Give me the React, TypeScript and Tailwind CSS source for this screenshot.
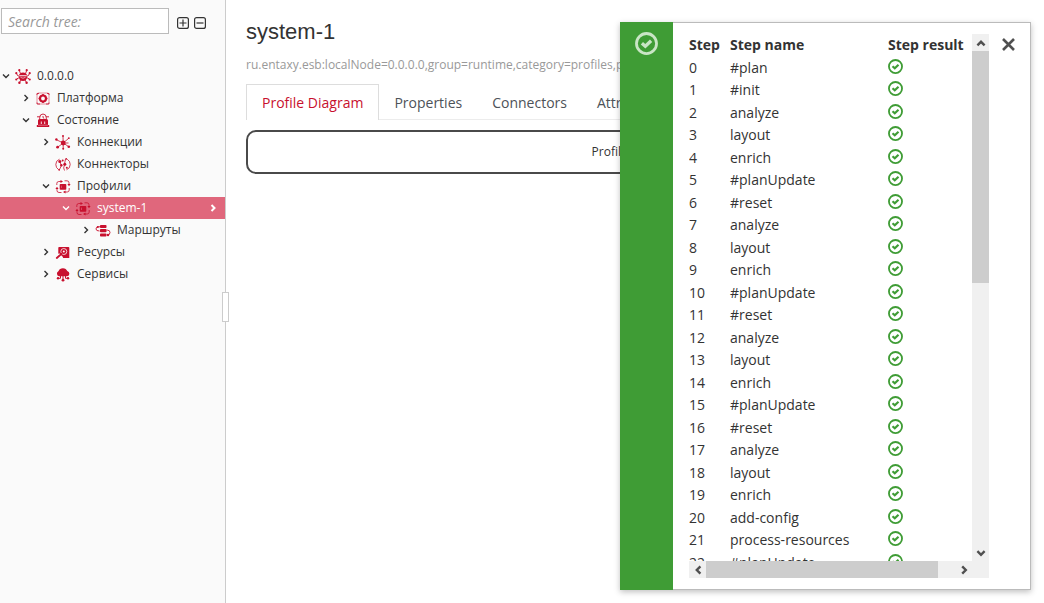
import React from 'react';

type IconName = 'node' | 'platform' | 'state' | 'connections' | 'connectors' | 'profile' | 'routes' | 'resources' | 'services';

interface TreeItem {
  label: string;
  level: number;
  icon: IconName;
  open?: boolean;
  leaf?: boolean;
  selected?: boolean;
}

const TREE: TreeItem[] = [
  { label: '0.0.0.0', level: 0, icon: 'node', open: true },
  { label: 'Платформа', level: 1, icon: 'platform' },
  { label: 'Состояние', level: 1, icon: 'state', open: true },
  { label: 'Коннекции', level: 2, icon: 'connections' },
  { label: 'Коннекторы', level: 2, icon: 'connectors', leaf: true },
  { label: 'Профили', level: 2, icon: 'profile', open: true },
  { label: 'system-1', level: 3, icon: 'profile', open: true, selected: true },
  { label: 'Маршруты', level: 4, icon: 'routes' },
  { label: 'Ресурсы', level: 2, icon: 'resources' },
  { label: 'Сервисы', level: 2, icon: 'services' },
];

const INDENT = ['pl-0', 'pl-5', 'pl-10', 'pl-[60px]', 'pl-20'];

const TABS = ['Profile Diagram', 'Properties', 'Connectors', 'Attributes'];

const STEPS = [
  '#plan', '#init',
  'analyze', 'layout', 'enrich', '#planUpdate', '#reset',
  'analyze', 'layout', 'enrich', '#planUpdate', '#reset',
  'analyze', 'layout', 'enrich', '#planUpdate', '#reset',
  'analyze', 'layout', 'enrich',
  'add-config', 'process-resources', '#planUpdate',
];

const ICONS: Record<IconName, React.ReactNode> = {
  node: (
    <>
      <path d="M4.5 8 H3 L1.5 5.5 M11.5 8 H13 L14.5 5.5 M5.5 5.5 L4.3 2.5 M10.5 5.5 L11.7 2.5 M4.5 10 H3 L1.5 11.5 M11.5 10 H13 L14.5 11.5 M6 12 L4.5 14.5 M10 12 L11.5 14.5" fill="none" stroke="currentColor" strokeWidth="0.9" />
      <path d="M4 7.3 Q4.6 4.6 8 4.6 Q11.4 4.6 12 7.3 Z M4 8.2 H12 V9.5 Q11.5 13 8 13 Q4.5 13 4 9.5 Z" fill="currentColor" />
      <path d="M5.5 9.3 Q8 11.2 10.5 9.3" fill="none" stroke="#fafafa" strokeWidth="0.6" />
      <g fill="currentColor">
        <circle cx="4.3" cy="2.2" r="1.1" /><circle cx="11.7" cy="2.2" r="1.1" />
        <circle cx="1.3" cy="5.2" r="1.1" /><circle cx="14.7" cy="5.2" r="1.1" />
        <circle cx="1.3" cy="11.5" r="1.1" /><circle cx="14.7" cy="11.5" r="1.1" />
        <circle cx="4.4" cy="14.7" r="1.2" /><circle cx="11.6" cy="14.7" r="1.2" />
      </g>
    </>
  ),
  platform: (
    <>
      <rect x="2" y="3" width="12" height="11" rx="1.5" fill="none" stroke="currentColor" strokeWidth="1" opacity="0.45" />
      <path d="M2 5 V3.5 H4 M14 5 V3.5 H12 M2 12.5 V14 H5 M14 12.5 V14 H11" fill="none" stroke="currentColor" strokeWidth="0.8" />
      <circle cx="8" cy="8.5" r="3" fill="none" stroke="currentColor" strokeWidth="2.2" />
      <path d="M8 4 V5.5 M8 11.5 V13 M3.5 8.5 H5 M11 8.5 H12.5" stroke="currentColor" strokeWidth="1.6" />
    </>
  ),
  state: (
    <>
      <path d="M4.7 7 V5.8 A3.3 3.8 0 0 1 11.3 5.8 V7" fill="none" stroke="currentColor" strokeWidth="0.9" />
      <path d="M8 4 V5.6 L9.2 6.4 M2 4.8 H5 M11 4.8 H14" fill="none" stroke="currentColor" strokeWidth="0.9" />
      <path d="M3 8.5 Q3 7 4.5 7 H11.5 Q13 7 13 8.5 V13 H14.2 V15 H1.8 V13 H3 Z" fill="currentColor" />
      <path d="M6.3 9.5 V12 M9.7 9.5 V12" stroke="#fafafa" strokeWidth="0.9" />
      <path d="M3 13.2 H13" stroke="#fafafa" strokeWidth="0.4" />
    </>
  ),
  connections: (
    <>
      <path d="M8.2 9 L8 2.5 M8.2 9 L2 6 M8.2 9 L13.5 4.5 M8.2 9 L3 13 M8.2 9 L13.5 12.5 M8.2 9 V14.5 M8.2 9 H13.5" stroke="currentColor" strokeWidth="0.8" />
      <g fill="currentColor">
        <circle cx="8.2" cy="9" r="2.4" /><circle cx="8" cy="2" r="1" />
        <circle cx="1.4" cy="5.5" r="1.2" /><circle cx="13.8" cy="4.2" r="0.9" />
        <circle cx="2.6" cy="13.2" r="1.4" /><circle cx="13.8" cy="12.8" r="1.3" /><circle cx="8.2" cy="14.8" r="1" />
      </g>
    </>
  ),
  connectors: (
    <>
      <path d="M4.5 3.2 Q0.8 4.5 0.8 8.5 Q0.8 12 3.8 13.8 M11.5 13.8 Q15.2 12.5 15.2 8.5 Q15.2 5 12.2 3.2 M5 6.2 L6.5 9.5 L4.5 13.5 M9.5 14.5 Q7.8 12 9.5 9 M9.5 8 L10.5 3" fill="none" stroke="currentColor" strokeWidth="0.8" />
      <g fill="currentColor">
        <circle cx="4.8" cy="5.5" r="1.5" /><circle cx="7.7" cy="4.4" r="1" />
        <circle cx="6.3" cy="9.3" r="1.2" /><circle cx="9.8" cy="8.2" r="1.5" />
        <circle cx="4.2" cy="13.8" r="0.9" /><circle cx="11.2" cy="2.8" r="0.9" /><circle cx="11.8" cy="11.8" r="1" />
      </g>
    </>
  ),
  profile: (
    <>
      <path d="M1.8 7 V5.5 Q1.8 3.5 3.8 3.5 H6 M9.5 2.8 H12 Q14 2.8 14 4.8 V6 M14.2 10 V12 Q14.2 14 12.2 14 H10 M6.5 14.5 H4 Q2 14.5 2 12.5 V11" fill="none" stroke="currentColor" strokeWidth="0.8" />
      <path d="M5.5 1.9 L8 3.5 L5.5 5.1 Z M12.4 6 H15.6 L14 8.2 Z M10.5 12.4 L8 14 L10.5 15.6 Z M0.4 11 H3.6 L2 8.8 Z" fill="currentColor" />
      <rect x="4.7" y="5.9" width="6.6" height="5.8" rx="0.8" fill="currentColor" />
      <path d="M6.5 7.6 V10" stroke="#fff" strokeWidth="0.5" opacity="0.5" />
    </>
  ),
  routes: (
    <>
      <path d="M5 4.8 H3 Q1 5 1 7 Q1 9 4.5 9 M11.5 8.2 H12.5 Q15 8.2 15 10.5 Q15 13.2 12 13.2" fill="none" stroke="currentColor" strokeWidth="0.9" />
      <g fill="currentColor">
        <rect x="5" y="3" width="6.5" height="3" rx="0.8" />
        <rect x="5" y="7" width="6.5" height="3.2" rx="0.8" />
        <rect x="5" y="11.5" width="6.5" height="3" rx="0.8" />
        <circle cx="2.8" cy="5" r="1" /><circle cx="13" cy="13" r="1.2" />
      </g>
    </>
  ),
  resources: (
    <>
      <path d="M4 3 H13.5 Q14.3 3 14.3 4 V14 H8 L4 10 L3.3 9.5 V4 Q3.3 3 4 3 Z" fill="currentColor" />
      <circle cx="8.8" cy="7.5" r="3" fill="none" stroke="#fafafa" strokeWidth="0.8" />
      <circle cx="8.8" cy="7.5" r="1" fill="#fafafa" />
      <path d="M3.5 10 L7.5 14" stroke="#fafafa" strokeWidth="2" />
      <path d="M6.5 9.8 L1.8 14" stroke="currentColor" strokeWidth="1.8" strokeLinecap="round" />
    </>
  ),
  services: (
    <>
      <path d="M4 10.3 A2.9 2.9 0 0 1 3.6 4.9 A4.5 4 0 0 1 12.2 5 A2.7 2.7 0 0 1 12.2 10.3 Z" fill="currentColor" />
      <path d="M8 10 V14 M5.5 10 V12.3 H3.5 M10.5 10 V12.3 H12.5" fill="none" stroke="currentColor" strokeWidth="1" />
      <g fill="currentColor">
        <circle cx="8" cy="14.2" r="1.4" /><circle cx="3" cy="12.3" r="1.2" /><circle cx="13" cy="12.3" r="1.2" />
      </g>
    </>
  ),
};

const TreeIcon = ({ name }: { name: IconName }) => (
  <svg viewBox="0 0 16 16" className="size-4 shrink-0 text-[#c8102e]" aria-hidden="true">{ICONS[name]}</svg>
);

const CHEVRONS = {
  up: 'M2 7 L5 4 L8 7',
  down: 'M2 3.5 L5 6.5 L8 3.5',
  left: 'M7 2 L4 5 L7 8',
  right: 'M3.5 2 L6.5 5 L3.5 8',
};

const Chevron = ({ dir, className, width = 1.4 }: { dir: keyof typeof CHEVRONS; className: string; width?: number }) => (
  <svg viewBox="0 0 10 10" className={className} fill="none" stroke="currentColor" strokeWidth={width} aria-hidden="true">
    <path d={CHEVRONS[dir]} />
  </svg>
);

const OkIcon = ({ className }: { className: string }) => (
  <svg viewBox="0 0 14 14" className={className} fill="none" stroke="currentColor" aria-hidden="true">
    <circle cx="7" cy="7" r="6.1" strokeWidth="1.7" />
    <path d="M4.2 6.8 L6.3 8.7 L9.8 5.3" strokeWidth="2" />
  </svg>
);

const SquareIcon = ({ plus }: { plus?: boolean }) => (
  <svg viewBox="0 0 12 12" className="size-3" fill="none" stroke="currentColor" strokeWidth="1.2" aria-hidden="true">
    <rect x="0.6" y="0.6" width="10.8" height="10.8" rx="2" />
    <path d={plus ? 'M2.5 6 H9.5 M6 2.5 V9.5' : 'M2.5 6 H9.5'} />
  </svg>
);

const Sidebar = () => (
  <aside className="relative w-[226px] shrink-0 border-r border-[#ccc] bg-[#fafafa]">
    <div className="flex items-center gap-[5px] pt-2 pl-px">
      <input
        type="text"
        aria-label="Search tree"
        placeholder="Search tree:"
        className="mr-[3px] h-[26px] w-[168px] border border-[#bbb] bg-white px-[6px] text-sm placeholder:text-[#999] placeholder:italic"
      />
      <button aria-label="Expand all" className="mt-[3px]"><SquareIcon plus /></button>
      <button aria-label="Collapse all" className="mt-[3px]"><SquareIcon /></button>
    </div>

    <ul className="mt-[31px]">
      {TREE.map((item) => (
        <li
          key={item.label}
          className={`flex h-[22px] items-center ${INDENT[item.level]} ${item.selected ? 'bg-[#e0677c] text-white' : ''}`}
        >
          <span className="flex w-[15px] shrink-0 justify-center pr-[3px]">
            {!item.leaf && <Chevron dir={item.open ? 'down' : 'right'} className="size-[10px]" />}
          </span>
          <TreeIcon name={item.icon} />
          <span className="ml-[6px] flex-1 text-xs">{item.label}</span>
          {item.selected && <Chevron dir="right" className="mr-[7px] size-[10px]" width={2} />}
        </li>
      ))}
    </ul>

    <div className="absolute top-[292px] -right-1 h-[30px] w-[7px] border border-[#ccc] bg-white" />
  </aside>
);

const ProfileView = () => (
  <main className="min-w-0 flex-1 pt-[18px] pr-5 pl-5">
    <h1 className="font-['Liberation_Sans',sans-serif] text-[22px] leading-7">system-1</h1>
    <p className="mt-2 overflow-hidden text-xs leading-[22px] whitespace-nowrap text-[#999]">
      ru.entaxy.esb:localNode=0.0.0.0,group=runtime,category=profiles,profile=system-1
    </p>
    <nav className="mt-2 flex h-9 border-b border-[#ececec] text-sm text-[#4d5258]">
      {TABS.map((tab, i) => (
        <a
          key={tab}
          href="#"
          className={`h-9 border-t px-[15px] leading-9 ${i === 0 ? 'border-x border-[#ddd] bg-white text-[#c8102e]' : 'border-transparent'}`}
        >
          {tab}
        </a>
      ))}
    </nav>
    <section className="mt-[10px] rounded-[10px] border-2 border-[#4a4a4a] py-[10px] text-center text-xs leading-5">
      Profile Diagram
    </section>
  </main>
);

const ScrollButton = ({ dir }: { dir: keyof typeof CHEVRONS }) => (
  <button aria-label={`Scroll ${dir}`} className="flex size-[17px] shrink-0 items-center justify-center text-[#505050]">
    <Chevron dir={dir} className="size-3" width={2} />
  </button>
);

const StepsNotification = () => (
  <div role="alert" className="absolute top-[22px] right-[13px] flex w-[411px] bg-white shadow-[0_2px_6px_rgba(3,3,3,0.25)]">
    <div className="flex w-[53px] shrink-0 justify-center bg-[#3f9c35] pt-[10px]">
      <OkIcon className="size-[23px] text-[#c9e5c5]" />
    </div>
    <div className="flex flex-1 items-start border border-l-0 border-[#bbb] py-[11px] pr-[14px] pl-4">
      <div className="flex flex-1 bg-[#f0f0f0]">
        <div className="flex-1">
          <div className="h-[527px] overflow-hidden bg-white">
            <table className="w-full table-fixed text-left text-sm leading-[22px]">
              <colgroup>
                <col className="w-[41px]" />
                <col className="w-[158px]" />
                <col />
              </colgroup>
              <thead>
                <tr className="h-[23px] align-top">
                  <th className="p-0">Step</th>
                  <th className="p-0">Step name</th>
                  <th className="p-0 whitespace-nowrap">Step result</th>
                </tr>
              </thead>
              <tbody>
                {STEPS.map((step, i) => (
                  <tr key={i} className="align-top odd:h-[22px] even:h-[23px]">
                    <td className="p-0">{i}</td>
                    <td className="p-0">{step}</td>
                    <td className="p-0 pt-[2px]"><OkIcon className="size-[15px] text-[#3f9c35]" /></td>
                  </tr>
                ))}
              </tbody>
            </table>
          </div>
          <div className="flex justify-between">
            <ScrollButton dir="left" />
            <div className="mr-auto w-[232px] bg-[#cdcdcd]" />
            <ScrollButton dir="right" />
          </div>
        </div>
        <div className="flex w-[17px] shrink-0 flex-col pb-[17px]">
          <ScrollButton dir="up" />
          <div className="mb-auto h-[232px] bg-[#cdcdcd]" />
          <ScrollButton dir="down" />
        </div>
      </div>
      <button aria-label="Close" className="mt-[3px] ml-3 text-[#505050]">
        <svg viewBox="0 0 15 15" className="size-[15px]" fill="none" stroke="currentColor" strokeWidth="2.6" aria-hidden="true">
          <path d="M2 2 L13 13 M13 2 L2 13" />
        </svg>
      </button>
    </div>
  </div>
);

const App: React.FC = () => {
  return (
    <div className="relative flex min-h-screen bg-white font-['Open_Sans',sans-serif] text-[#333]">
      <Sidebar />
      <ProfileView />
      <StepsNotification />
    </div>
  );
};

export default App;
